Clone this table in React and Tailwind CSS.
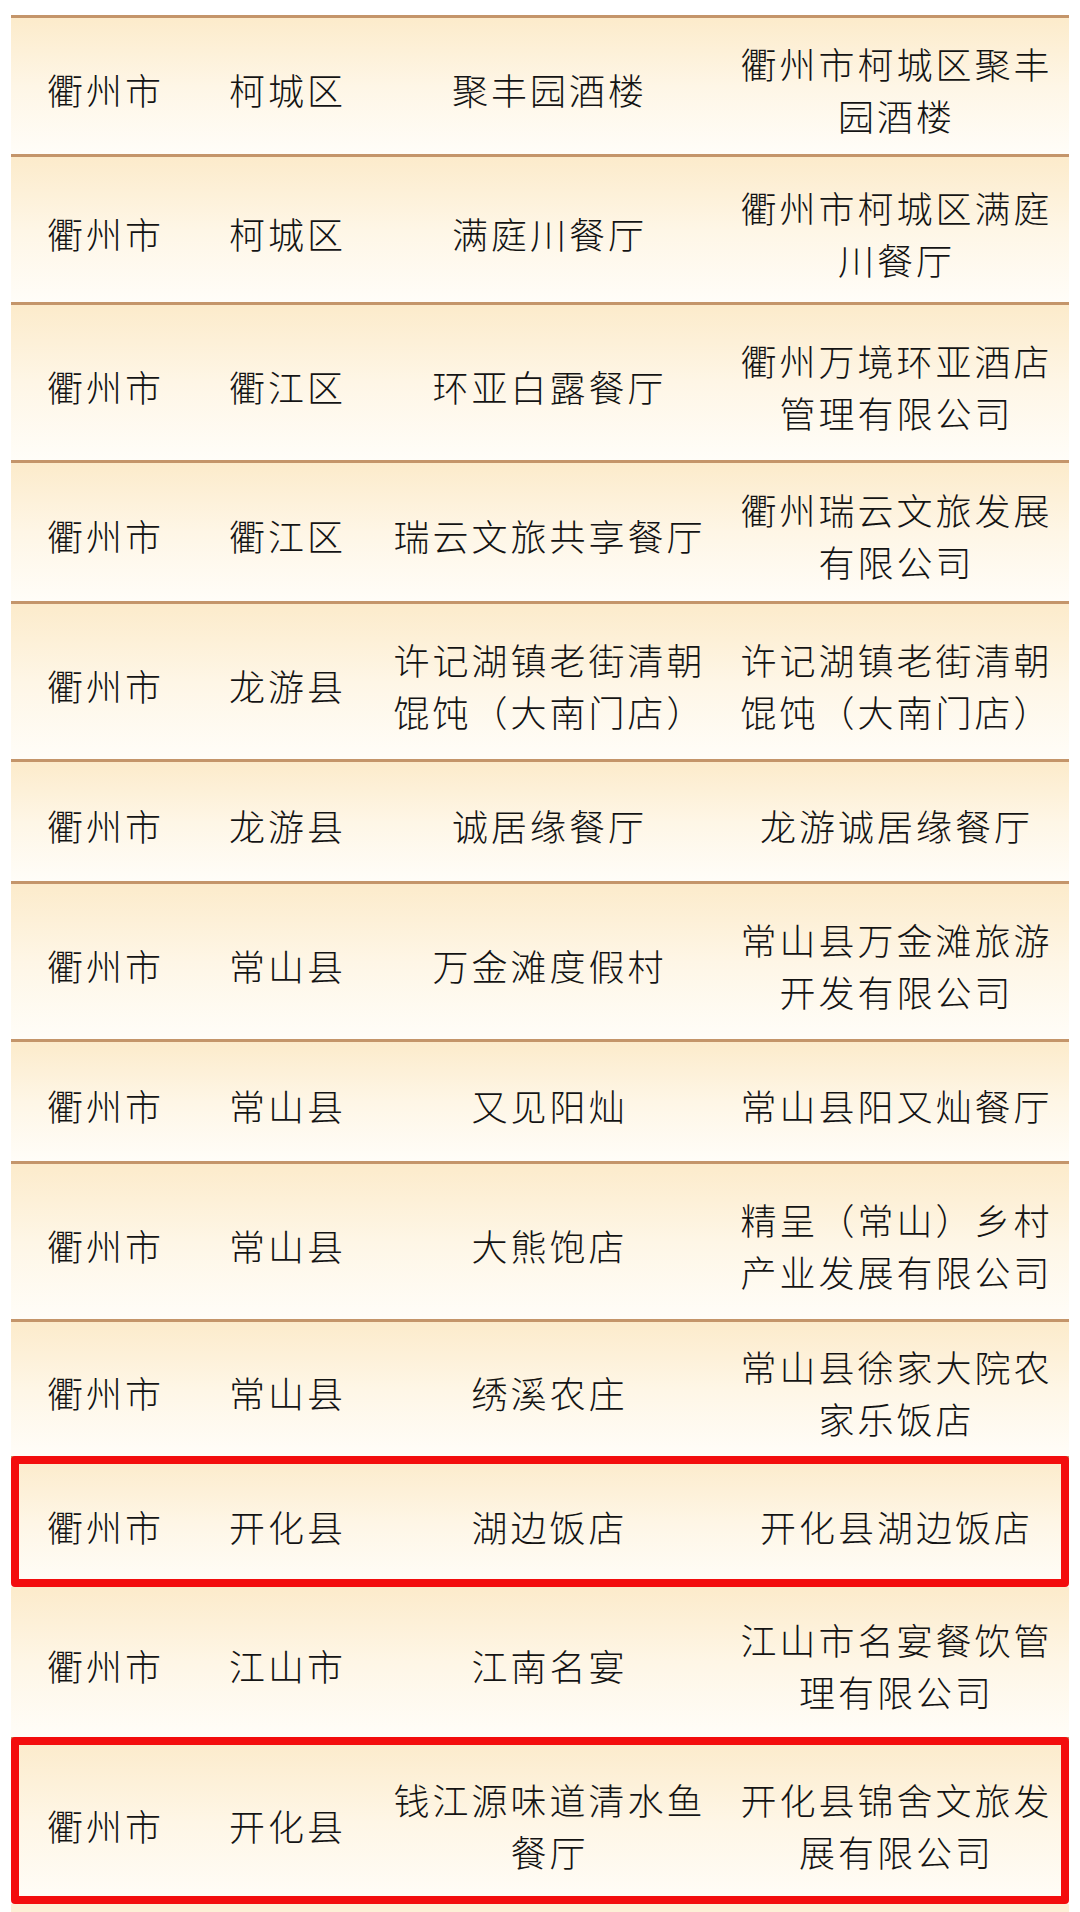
const rows = [
  { city: '衢州市', county: '柯城区', name: ['聚丰园酒楼'], owner: ['衢州市柯城区聚丰', '园酒楼'], h: 'h-[139px]' },
  { city: '衢州市', county: '柯城区', name: ['满庭川餐厅'], owner: ['衢州市柯城区满庭', '川餐厅'], h: 'h-[148px]' },
  { city: '衢州市', county: '衢江区', name: ['环亚白露餐厅'], owner: ['衢州万境环亚酒店', '管理有限公司'], h: 'h-[158px]' },
  { city: '衢州市', county: '衢江区', name: ['瑞云文旅共享餐厅'], owner: ['衢州瑞云文旅发展', '有限公司'], h: 'h-[141px]' },
  { city: '衢州市', county: '龙游县', name: ['许记湖镇老街清朝', '馄饨（大南门店）'], owner: ['许记湖镇老街清朝', '馄饨（大南门店）'], h: 'h-[158px]' },
  { city: '衢州市', county: '龙游县', name: ['诚居缘餐厅'], owner: ['龙游诚居缘餐厅'], h: 'h-[122px]' },
  { city: '衢州市', county: '常山县', name: ['万金滩度假村'], owner: ['常山县万金滩旅游', '开发有限公司'], h: 'h-[158px]' },
  { city: '衢州市', county: '常山县', name: ['又见阳灿'], owner: ['常山县阳又灿餐厅'], h: 'h-[122px]' },
  { city: '衢州市', county: '常山县', name: ['大熊饱店'], owner: ['精呈（常山）乡村', '产业发展有限公司'], h: 'h-[158px]' },
  { city: '衢州市', county: '常山县', name: ['绣溪农庄'], owner: ['常山县徐家大院农', '家乐饭店'], h: 'h-[137px]' },
  { city: '衢州市', county: '开化县', name: ['湖边饭店'], owner: ['开化县湖边饭店'], h: 'h-[131px]', marked: true },
  { city: '衢州市', county: '江山市', name: ['江南名宴'], owner: ['江山市名宴餐饮管', '理有限公司'], h: 'h-[150px]', noLine: true },
  { city: '衢州市', county: '开化县', name: ['钱江源味道清水鱼', '餐厅'], owner: ['开化县锦舍文旅发', '展有限公司'], h: 'h-[167px]', marked: true },
];

const Cell = ({ lines }) => (
  <div className="flex flex-col items-center justify-center pt-[6px] pl-[3px]">
    {lines.map((line) => (
      <span key={line} className="whitespace-nowrap leading-[52px]">
        {line}
      </span>
    ))}
  </div>
);

export default function App() {
  return (
    <div
      className="min-h-[1912px] w-[1080px] bg-white pt-[15px] text-[36px] font-light tracking-[3px] text-[#141414]"
      style={{ fontFamily: '"Noto Sans CJK SC", "Noto Sans", sans-serif' }}
    >
      <div className="mx-[11px]">
        {rows.map((row, i) => (
          <div
            key={i}
            className={`relative grid grid-cols-[186px_178px_346px_1fr] bg-linear-to-b from-[#fcebcb] via-[#fef6e6] to-[#fffdf8] ${row.h} ${
              row.noLine ? '' : 'border-t-[3px] border-[#c4956a]'
            }`}
          >
            <Cell lines={[row.city]} />
            <Cell lines={[row.county]} />
            <Cell lines={row.name} />
            <Cell lines={row.owner} />
            {row.marked ? (
              <div className="pointer-events-none absolute -top-[3px] right-0 bottom-0 left-0 rounded-[4px] border-[8px] border-[#f30d0d]" />
            ) : null}
          </div>
        ))}
        <div className="h-[8px] bg-[#fdf0d6]" />
      </div>
    </div>
  );
}
